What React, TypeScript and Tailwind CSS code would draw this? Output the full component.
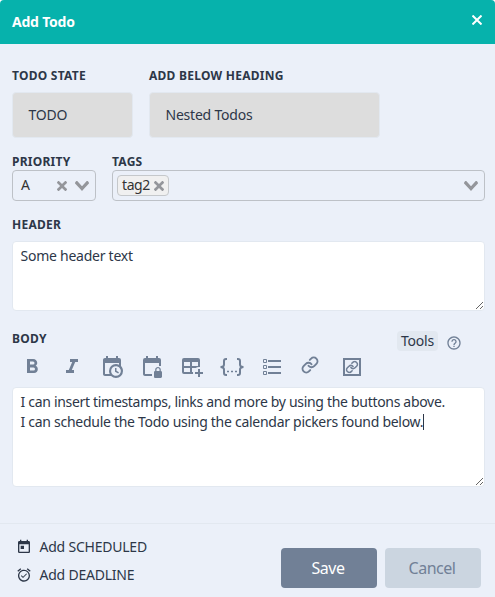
import { Link as LinkIcon } from "lucide-react";
import { MdAlarmOn, MdHelpOutline, MdToday } from "react-icons/md";

const TOOLBAR = [
  {
    name: "Bold",
    path: "M13.5,15.5H10V12.5H13.5A1.5,1.5 0 0,1 15,14A1.5,1.5 0 0,1 13.5,15.5M10,6.5H13A1.5,1.5 0 0,1 14.5,8A1.5,1.5 0 0,1 13,9.5H10M15.6,10.79C16.57,10.11 17.25,9 17.25,8C17.25,5.74 15.5,4 13.25,4H7V18H14.04C16.14,18 17.82,16.29 17.82,14.21C17.82,12.69 16.96,11.39 15.6,10.79Z",
  },
  { name: "Italic", path: "M10,4V7H12.21L8.79,15H6V18H14V15H11.79L15.21,7H18V4H10Z" },
  {
    name: "Timestamp",
    path: "M15,13H16.5V15.82L18.94,17.23L18.19,18.53L15,16.69V13M19,8H5V19H9.67C9.24,18.09 9,17.07 9,16A7,7 0 0,1 16,9C17.07,9 18.09,9.24 19,9.67V8M5,21C3.89,21 3,20.1 3,19V5C3,3.89 3.89,3 5,3H6V1H8V3H16V1H18V3H19A2,2 0 0,1 21,5V11.1C22.24,12.36 23,14.09 23,16A7,7 0 0,1 16,23C14.09,23 12.36,22.24 11.1,21H5M16,11.15A4.85,4.85 0 0,0 11.15,16C11.15,18.68 13.32,20.85 16,20.85A4.85,4.85 0 0,0 20.85,16C20.85,13.32 18.68,11.15 16,11.15Z",
  },
  {
    name: "Inactive timestamp",
    path: "M5 19V8h14v3h2V5a2 2 0 0 0-2-2h-1V1h-2v2H8V1H6v2H5a2 2 0 0 0-2 2v14c0 1.1.9 2 2 2h7v-2H5zM20.8 16v-1.5c0-1.4-1.4-2.5-2.8-2.5s-2.8 1.1-2.8 2.5V16c-.6 0-1.2.6-1.2 1.2v4.5c0 .7.6 1.3 1.2 1.3h5.5c.7 0 1.3-.6 1.3-1.2v-4.5c0-.7-.6-1.3-1.2-1.3m-1.3 0h-3v-1.5c0-.8.7-1.3 1.5-1.3s1.5.5 1.5 1.3V16z",
  },
  {
    name: "Table",
    path: "M18,14H20V17H23V19H20V22H18V19H15V17H18V14M4,3H18A2,2 0 0,1 20,5V12.08C18.45,11.82 16.92,12.18 15.68,13H12V17H13.08C12.97,17.68 12.97,18.35 13.08,19H4A2,2 0 0,1 2,17V5A2,2 0 0,1 4,3M4,7V11H10V7H4M12,7V11H18V7H12M4,13V17H10V13H4Z",
  },
];

function ClearIcon() {
  return (
    <svg width="10" height="10" viewBox="0 0 10 10" fill="currentColor">
      <path d="M6.895455 5l2.842897-2.842898c.348864-.348863.348864-.914488 0-1.263636L9.106534.261648c-.348864-.348864-.914489-.348864-1.263636 0L5 3.104545 2.157102.261648c-.348863-.348864-.914488-.348864-1.263636 0L.261648.893466c-.348864.348864-.348864.914489 0 1.263636L3.104545 5 .261648 7.842898c-.348864.348863-.348864.914488 0 1.263636l.631818.631818c.348864.348864.914773.348864 1.263636 0L5 6.895455l2.842898 2.842897c.348863.348864.914772.348864 1.263636 0l.631818-.631818c.348864-.348864.348864-.914489 0-1.263636L6.895455 5z" />
    </svg>
  );
}

function ChevronIcon() {
  return (
    <svg width="14" height="10" viewBox="0 0 14 10" fill="currentColor">
      <path d="M9.211364 7.59931l4.48338-4.867229c.407008-.441854.407008-1.158247 0-1.60046l-.73712-.80023c-.407008-.441854-1.066904-.441854-1.474243 0L7 5.198617 2.51662.33139c-.407008-.441853-1.066904-.441853-1.474243 0l-.737121.80023c-.407008.441854-.407008 1.158248 0 1.600461l4.48338 4.867228L7 10l2.211364-2.40069z" />
    </svg>
  );
}

function Label({ children }: { children: string }) {
  return (
    <label className="block whitespace-nowrap text-[12px] font-bold uppercase leading-4 tracking-[0.25px]">{children}</label>
  );
}

export default function App() {
  return (
    <div className="flex h-[597px] w-[495px] flex-col overflow-hidden rounded-t bg-[#ebf0f9] font-['Noto_Sans',sans-serif] text-sm tracking-[-0.22px] text-[#2d3748]">
      <header className="flex h-11 shrink-0 items-center justify-between bg-[#06b2ac] pl-3 pr-[13px] text-white">
        <h1 className="text-sm font-bold">Add Todo</h1>
        <button className="pb-1">
          <svg width="10" height="10" viewBox="0 0 10 10" fill="none" stroke="currentColor" strokeWidth="2">
            <path d="M.5.5l9 9M9.5.5l-9 9" />
          </svg>
        </button>
      </header>

      <main className="flex h-[479px] shrink-0 flex-col pl-3 pr-[10px] pt-6">
        <div className="flex gap-4">
          <div className="w-[121px]">
            <Label>Todo state</Label>
            <div className="mt-2 flex h-[46px] items-center rounded border border-[#e2e8f0] bg-[#dddddd] px-[15.5px]">TODO</div>
          </div>
          <div className="w-[231px]">
            <Label>Add below heading</Label>
            <div className="mt-2 flex h-[46px] items-center rounded border border-[#e2e8f0] bg-[#dddddd] px-[15.5px]">Nested Todos</div>
          </div>
        </div>

        <div className="mt-4 flex gap-4">
          <div className="w-[84px]">
            <Label>Priority</Label>
            <div className="flex h-[31px] items-center rounded border border-[#bdc1c7] pl-2 pr-1.5 text-[#333]">
              <span className="flex-1 pb-0.5">A</span>
              <span className="flex items-center gap-2 text-[#94969b]">
                <ClearIcon />
                <ChevronIcon />
              </span>
            </div>
          </div>
          <div className="flex-1">
            <Label>Tags</Label>
            <div className="flex h-[31px] items-center justify-between rounded border border-[#bdc1c7] pl-1 pr-1.5 text-[#94969b]">
              <span className="flex h-[21px] items-center gap-1 rounded border border-[#c5c8cb] bg-[#f0f0f0] px-1">
                <span className="pb-0.5 tracking-[-0.4px] text-[#333]">tag2</span>
                <ClearIcon />
              </span>
              <ChevronIcon />
            </div>
          </div>
        </div>

        <div className="mt-4">
          <Label>Header</Label>
          <textarea
            className="mt-2 block h-[70px] w-full resize rounded border border-[#e2e8f0] bg-white px-[7.5px] py-1 leading-5 tracking-[-0.25px] outline-none"
            defaultValue="Some header text"
          />
        </div>

        <div className="mt-5 flex h-6 items-start justify-between pr-[23px]">
          <Label>Body</Label>
          <div className="flex items-center gap-2">
            <button className="flex h-5 items-center rounded bg-[#e2e8f0] px-1">Tools</button>
            <MdHelpOutline size={16} className="mt-1 text-[#718096]" />
          </div>
        </div>

        <div className="flex h-6 gap-4 pl-2 text-[#718096]">
          {TOOLBAR.map((t) => (
            <button key={t.name} title={t.name} className="size-6">
              <svg width="24" height="24" viewBox="0 0 24 24" fill="currentColor">
                <path d={t.path} />
              </svg>
            </button>
          ))}
          <button title="Source block" className="size-6">
            <svg width="24" height="24" viewBox="0 0 24 24" fill="none" stroke="currentColor" strokeWidth="2">
              <path d="M7 4H6Q4 4 4 6V9.5Q4 12 .5 12Q4 12 4 14.5V18Q4 20 6 20H7M17 4h1Q20 4 20 6V9.5Q20 12 23.5 12Q20 12 20 14.5V18Q20 20 18 20H17" />
              <path d="M7 16.5h2M11 16.5h2M15 16.5h2" strokeWidth="1.6" />
            </svg>
          </button>
          <button title="List" className="size-6">
            <svg width="24" height="24" viewBox="0 0 24 24" fill="none" stroke="currentColor">
              <path d="M3.5 4.5h3v3h-3zM3.5 10.5h3v3h-3zM3.5 16.5h3v3h-3z" />
              <path d="M8 6H21M8 12H21M8 18H21" strokeWidth="2" />
            </svg>
          </button>
          <button title="Link" className="size-6 pb-1 pl-px">
            <LinkIcon size={18} strokeWidth={2.6} />
          </button>
          <button title="Link block" className="size-6">
            <svg width="24" height="24" viewBox="0 0 24 24" fill="none" stroke="currentColor" strokeWidth="2">
              <path d="M4 4h16v16H4z" />
              <LinkIcon x="5.5" y="5.5" size={13} strokeWidth={2.8} />
            </svg>
          </button>
        </div>

        <div
          role="textbox"
          className="mt-2 h-[100px] w-full resize overflow-hidden whitespace-nowrap rounded border border-[#e2e8f0] bg-white px-[7.5px] py-1 leading-5"
        >
          <p className="tracking-[-0.31px]">I can insert timestamps, links and more by using the buttons above.</p>
          <p className="flex items-center tracking-[-0.28px]">
            <span>I can schedule the Todo using the calendar pickers found below.</span>
            <span className="h-4 w-px bg-[#2d3748]" />
          </p>
        </div>
      </main>

      <footer className="flex flex-1 items-start justify-between border-t border-[#e2e8f0] pl-4 pr-[14px]">
        <div className="pt-[13px]">
          <button className="flex h-5 items-center gap-[7.5px]">
            <MdToday size={16} />
            Add SCHEDULED
          </button>
          <button className="mt-2 flex h-5 items-center gap-[7.5px]">
            <MdAlarmOn size={16} />
            Add DEADLINE
          </button>
        </div>
        <div className="mt-6 flex gap-2 text-base tracking-[-0.5px]">
          <button className="h-10 w-24 rounded bg-[#718096] pr-0.5 text-white">Save</button>
          <button className="h-10 w-24 rounded bg-[#cbd5e0] pr-0.5 text-[#718096]">Cancel</button>
        </div>
      </footer>
    </div>
  );
}
